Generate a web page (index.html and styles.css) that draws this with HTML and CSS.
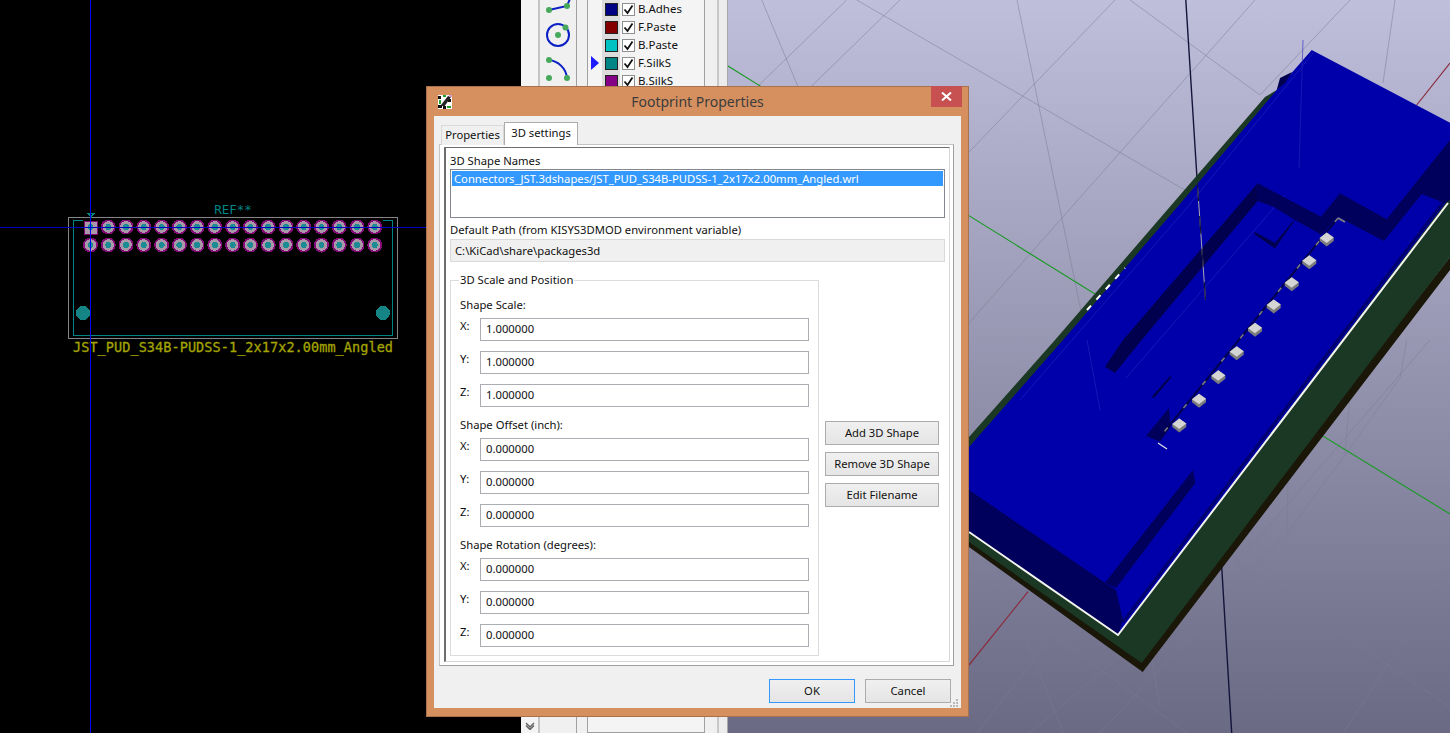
FILE: index.html
```html
<!DOCTYPE html>
<html lang="en">
<head>
    <meta charset="UTF-8">
    <meta name="viewport" content="width=device-width, initial-scale=1.0">
    <title>Footprint Properties</title>
    <link rel="stylesheet" href="styles.css">
</head>
<body>
<div class="desktop">

    <!-- footprint editor canvas -->
    <div class="pcb-view">
        <svg class="pcb-svg" width="521" height="733" viewBox="0 0 521 733">
            <defs>
                <g id="pad">
                    <circle class="pad-copper" r="7.500"/>
                    <circle class="pad-ring" r="5.800"/>
                    <circle class="pad-drill" r="3"/>
                </g>
            </defs>
            <rect class="court" x="68" y="217.500" width="329" height="121"/>
            <path class="silk" d="M83 220.500H73.500V335.500H392.500V220.500H383"/>
            <path class="silk-thin" d="M88 213.500H94L91 217Z"/>
            <circle class="hole" cx="83" cy="313" r="7"/>
            <circle class="hole" cx="383" cy="313" r="7"/>
            <rect class="pad-copper" x="84" y="220.500" width="14" height="14"/>
            <rect class="pad-ring" x="85" y="221.500" width="12" height="12"/>
            <circle class="pad-drill" cx="90.500" cy="227" r="3"/>
            <use href="#pad" x="108.300" y="227"/><use href="#pad" x="126" y="227"/><use href="#pad" x="143.800" y="227"/>
            <use href="#pad" x="161.600" y="227"/><use href="#pad" x="179.400" y="227"/><use href="#pad" x="197.100" y="227"/>
            <use href="#pad" x="214.900" y="227"/><use href="#pad" x="232.700" y="227"/><use href="#pad" x="250.400" y="227"/>
            <use href="#pad" x="268.200" y="227"/><use href="#pad" x="286" y="227"/><use href="#pad" x="303.700" y="227"/>
            <use href="#pad" x="321.500" y="227"/><use href="#pad" x="339.300" y="227"/><use href="#pad" x="357.100" y="227"/>
            <use href="#pad" x="374.800" y="227"/>
            <use href="#pad" x="90.500" y="245"/><use href="#pad" x="108.300" y="245"/><use href="#pad" x="126" y="245"/>
            <use href="#pad" x="143.800" y="245"/><use href="#pad" x="161.600" y="245"/><use href="#pad" x="179.400" y="245"/>
            <use href="#pad" x="197.100" y="245"/><use href="#pad" x="214.900" y="245"/><use href="#pad" x="232.700" y="245"/>
            <use href="#pad" x="250.400" y="245"/><use href="#pad" x="268.200" y="245"/><use href="#pad" x="286" y="245"/>
            <use href="#pad" x="303.700" y="245"/><use href="#pad" x="321.500" y="245"/><use href="#pad" x="339.300" y="245"/>
            <use href="#pad" x="357.100" y="245"/><use href="#pad" x="374.800" y="245"/>
            <text class="ref-text" x="233" y="213.500" text-anchor="middle">REF**</text>
            <text class="value-text" x="73" y="352" textLength="320" lengthAdjust="spacing">JST_PUD_S34B-PUDSS-1_2x17x2.00mm_Angled</text>
            <line class="cross-h" x1="0" y1="227.500" x2="521" y2="227.500"/>
            <line class="cross-v" x1="90.500" y1="0" x2="90.500" y2="733"/>
        </svg>
    </div>

    <!-- drawing tools -->
    <div class="tools">
        <div class="tools-gutter">
            <svg class="chevron" width="10" height="8" viewBox="0 0 10 8"><path d="M1 1L5 5L9 1M1 3.500L5 7.500L9 3.500"/></svg>
        </div>
        <div class="tools-strip">
            <svg width="37" height="90" viewBox="540 0 37 90">
                <path class="tool-line" d="M549 10L567 6L572 -6"/>
                <circle class="tool-line" cx="558" cy="35" r="11"/>
                <path class="tool-line" d="M549 60C558 61 566 68 567 78"/>
                <circle class="tool-dot" cx="549" cy="10" r="3"/>
                <circle class="tool-dot" cx="567" cy="6" r="3"/>
                <circle class="tool-dot" cx="558" cy="35" r="3"/>
                <circle class="tool-dot" cx="565.500" cy="27.500" r="3"/>
                <circle class="tool-dot" cx="549" cy="60" r="3"/>
                <circle class="tool-dot" cx="549" cy="78" r="3"/>
                <circle class="tool-dot" cx="567" cy="78" r="3"/>
            </svg>
        </div>
    </div>

    <!-- layer manager -->
    <div class="layers">
        <div class="layers-list">
            <div class="layer-row">
                <span class="layer-mark"></span>
                <span class="swatch"><i class="swatch-fill c-badhes"></i></span>
                <span class="check"><svg width="11" height="11" viewBox="0 0 11 11"><path d="M1.500 5.500L4.500 9L9.500 1.500"/></svg></span>
                <span class="layer-name">B.Adhes</span>
            </div>
            <div class="layer-row">
                <span class="layer-mark"></span>
                <span class="swatch"><i class="swatch-fill c-fpaste"></i></span>
                <span class="check"><svg width="11" height="11" viewBox="0 0 11 11"><path d="M1.500 5.500L4.500 9L9.500 1.500"/></svg></span>
                <span class="layer-name">F.Paste</span>
            </div>
            <div class="layer-row">
                <span class="layer-mark"></span>
                <span class="swatch"><i class="swatch-fill c-bpaste"></i></span>
                <span class="check"><svg width="11" height="11" viewBox="0 0 11 11"><path d="M1.500 5.500L4.500 9L9.500 1.500"/></svg></span>
                <span class="layer-name">B.Paste</span>
            </div>
            <div class="layer-row">
                <span class="layer-mark"><i class="layer-arrow"></i></span>
                <span class="swatch"><i class="swatch-fill c-fsilk"></i></span>
                <span class="check"><svg width="11" height="11" viewBox="0 0 11 11"><path d="M1.500 5.500L4.500 9L9.500 1.500"/></svg></span>
                <span class="layer-name">F.SilkS</span>
            </div>
            <div class="layer-row">
                <span class="layer-mark"></span>
                <span class="swatch"><i class="swatch-fill c-bsilk"></i></span>
                <span class="check"><svg width="11" height="11" viewBox="0 0 11 11"><path d="M1.500 5.500L4.500 9L9.500 1.500"/></svg></span>
                <span class="layer-name">B.SilkS</span>
            </div>
        </div>
        <div class="layers-side"></div>
    </div>

    <!-- 3d viewer, coordinates in the viewBox are page pixels -->
    <div class="view3d">
        <svg width="722" height="733" viewBox="728 0 722 733">
            <defs>
                <linearGradient id="sky" x1="0" y1="0" x2="0" y2="1">
                    <stop offset="0" stop-color="#bfbfdb"/>
                    <stop offset="1" stop-color="#6a6a85"/>
                </linearGradient>
                <g id="pin">
                    <path class="pin-side" d="M-7 0L0 -5.500L7 -0.500V3L0 8.500L-7 3Z"/>
                    <path class="pin-top" d="M-7 0L0 -5.500L7 -0.500L0 5Z"/>
                </g>
            </defs>
            <rect x="728" y="0" width="722" height="733" fill="url(#sky)"/>

            <g class="grid">
                <path d="M761.700 0L797.700 86M846.700 0L758 86M900 0L811.700 86M856.700 0L1190 193M1115 0L923 200"/>
                <path d="M1255 0L969 323M1017 0L1087 340M1130 0L1260 95M1395 0L1383 83M1350 0L1260 95"/>
                <path d="M1406.700 340L1400 378L1345 455L1287 533L1100 733M1350 393L1345 455M1288 480L1287 533"/>
                <path d="M1152 660L1160 707M1430 340L1237 563M1237 563L1450 707M1450 570L1343 733"/>
                <path d="M969 573L1187 733M993 553L1063 733M1067 617L977 733M1127 650L1030 733"/>
            </g>

            <path class="axis-green" d="M728 66L1095 294M1320 434.300L1450 514"/>
            <path class="axis-red" d="M1416.700 105L1450 63M1028 591.700L969 665"/>
            <path class="axis-z" d="M1185.800 0L1197.300 183M1221.700 566.700L1231.700 733"/>

            <!-- board -->
            <path class="board-under" d="M969 547L1142.700 672L1450 270V257L1141.700 655L969 540Z"/>
            <path class="board" d="M1265 97L1193 180L1055 340L969 437V542L1141.700 663L1450 257V190L1311 70Z"/>

            <!-- connector body -->
            <path class="body" d="M1311.700 50L1450 122.700V197L1118 635L969 532V447L1063 340L1198 183L1270 98L1276.700 90Z"/>
            <path class="body-dark2" d="M1276.700 90L1280 78L1292 72L1285 83Z"/>

            <g class="grid-faint">
                <path d="M1303 40L1299 168M1313 53L1185 210L1020 400M1285 195L1126 378M1087 340L1100 410"/>
            </g>

            <path class="edge-dark" d="M1123 622L1338 340L1448 196"/>

            <path class="body-dark" d="M969 490L1105 582.700L1116 590L1123 620L1118 635L969 532Z"/>
            <path class="body-dark" d="M1105 582.700L1193 470L1195.300 483L1116 588Z"/>
            <path class="body-dark2" d="M1257.700 183.300L1123 340L1105 366.700L1115 373L1141.700 340L1257.700 201Z"/>
            <path class="body-dark" d="M1257.700 183.300L1321 216.700L1340 193.300L1386.700 219.300L1450 140V200L1445 203.300L1421.700 194L1384 241L1337.700 216.700L1321.700 235L1295 220L1273.300 206.700L1257.700 201Z"/>
            <path class="body-dark2" d="M1295 220L1275 248.300L1254.300 234.300L1255 232L1275 243L1293 221Z"/>
            <path class="body-dark2" d="M1151.700 396.700L1170 376L1171.300 377.300L1154.300 397.700Z"/>
            <path class="body-dark" d="M1169 408L1170.700 426.700L1160 441.700L1146 436Z"/>

            <path class="pin-rail" d="M1338 218L1160 437"/>
            <path class="pin-dash" d="M1338 218L1160 437"/>
            <path class="pin-end" d="M1338 218L1345 222"/>
            <path class="pin-white" d="M1158 443L1167 449"/>
            <use href="#pin" x="1326.700" y="238"/>
            <use href="#pin" x="1309.300" y="260.700"/>
            <use href="#pin" x="1291.700" y="282.700"/>
            <use href="#pin" x="1273.700" y="305"/>
            <use href="#pin" x="1255" y="328.300"/>
            <use href="#pin" x="1236.700" y="351.700"/>
            <use href="#pin" x="1218.300" y="375.700"/>
            <use href="#pin" x="1199" y="399.300"/>
            <use href="#pin" x="1179.300" y="424"/>

            <path class="outline" d="M969 532L1118 635L1448 203"/>
            <path class="outline-dash" d="M1087 310L1125 268"/>
            <path class="axis-z-dash" d="M1197.300 183L1205.500 300"/>
            <path class="axis-z-dash2" d="M1197.300 183L1205.500 300"/>
        </svg>
    </div>

    <!-- dialog window -->
    <div class="dialog">
        <div class="titlebar">
            <svg class="app-icon" width="16" height="16" viewBox="0 0 16 16">
                <rect x="1" y="1" width="14" height="14" fill="#fff"/>
                <path d="M1 2h3v3H1zM1 11h4v3H1zM6 12h3v3H6zM11 5h3v3h-3z" fill="#111"/>
                <path d="M2 6h2v4H2zM6 1h3v2H6zM10 12h4v2h-4z" fill="#1fa32b"/>
                <path d="M4 11L11 2L14 3L7 13Z" fill="#222"/>
                <path d="M12 1h3v2h-3z" fill="#d59ad6"/>
            </svg>
            <span class="title-text">Footprint Properties</span>
            <div class="close-btn">
                <svg width="11" height="9" viewBox="0 0 11 9"><path d="M1 0.500L10 8.500M10 0.500L1 8.500"/></svg>
            </div>
        </div>
        <div class="client">
            <div class="tabs">
                <div class="tab">Properties</div>
                <div class="tab tab-active">3D settings</div>
            </div>
            <div class="tab-panel">
                <div class="panel-inner">
                    <div class="field-label">3D Shape Names</div>
                    <div class="listbox">
                        <div class="list-item">Connectors_JST.3dshapes/JST_PUD_S34B-PUDSS-1_2x17x2.00mm_Angled.wrl</div>
                    </div>
                    <div class="field-label path-label">Default Path (from KISYS3DMOD environment variable)</div>
                    <div class="path-box">C:\KiCad\share\packages3d</div>

                    <div class="lower">
                        <fieldset class="group">
                            <legend>3D Scale and Position</legend>

                            <div class="section-label first">Shape Scale:</div>
                            <div class="coord"><label>X:</label><input type="text" value="1.000000"></div>
                            <div class="coord"><label>Y:</label><input type="text" value="1.000000"></div>
                            <div class="coord"><label>Z:</label><input type="text" value="1.000000"></div>

                            <div class="section-label">Shape Offset (inch):</div>
                            <div class="coord"><label>X:</label><input type="text" value="0.000000"></div>
                            <div class="coord"><label>Y:</label><input type="text" value="0.000000"></div>
                            <div class="coord"><label>Z:</label><input type="text" value="0.000000"></div>

                            <div class="section-label">Shape Rotation (degrees):</div>
                            <div class="coord"><label>X:</label><input type="text" value="0.000000"></div>
                            <div class="coord"><label>Y:</label><input type="text" value="0.000000"></div>
                            <div class="coord"><label>Z:</label><input type="text" value="0.000000"></div>
                        </fieldset>
                        <div class="side-buttons">
                            <button class="btn">Add 3D Shape</button>
                            <button class="btn">Remove 3D Shape</button>
                            <button class="btn">Edit Filename</button>
                        </div>
                    </div>
                </div>
            </div>
            <div class="footer">
                <button class="btn btn-wide btn-default">OK</button>
                <button class="btn btn-wide">Cancel</button>
            </div>
            <svg class="grip" width="9" height="9" viewBox="0 0 9 9">
                <path d="M6 0h2v2H6zM3 3h2v2H3zM6 3h2v2H6zM0 6h2v2H0zM3 6h2v2H3zM6 6h2v2H6z"/>
            </svg>
        </div>
    </div>
</div>
</body>
</html>
```
FILE: styles.css
```css
* {
    box-sizing: border-box;
}

html, body {
    margin: 0;
    padding: 0;
    overflow: hidden;
}

body {
    font-family: "Noto Sans", "Open Sans", sans-serif;
    font-size: 11.25px;
    color: #111;
}

svg {
    display: block;
}

.desktop {
    position: relative;
    display: flex;
    width: 1450px;
    height: 733px;
    overflow: hidden;
}

/* pcb canvas */
.pcb-view {
    width: 521px;
    background: #000;
}

.pcb-svg {
    shape-rendering: crispEdges;
}

.court {
    fill: none;
    stroke: #848484;
}

.silk {
    fill: none;
    stroke: #008484;
    stroke-width: 1;
}

.silk-thin {
    fill: none;
    stroke: #008484;
    stroke-width: 1.5;
}

.hole {
    fill: #158484;
}

.pad-copper {
    fill: #840a78;
}

.pad-ring {
    fill: #a898a8;
}

.pad-drill {
    fill: #1c8c94;
}

.ref-text {
    font-family: "DejaVu Sans Mono", monospace;
    font-size: 12.500px;
    fill: #008484;
}

.value-text {
    font-family: "DejaVu Sans Mono", monospace;
    font-size: 13.500px;
    fill: #a4a400;
    stroke: #a4a400;
    stroke-width: 0.300px;
}

.cross-h {
    stroke: #0000c0;
}

.cross-v {
    stroke: #0000ff;
}

/* tool strip */
.tools {
    display: flex;
    width: 56px;
    background: #f0f0f0;
}

.tools-gutter {
    display: flex;
    justify-content: center;
    align-items: flex-end;
    width: 19px;
    padding-bottom: 3px;
    background: #f4f4f4;
    border-right: 2px solid #c4c4c4;
}

.chevron path {
    fill: none;
    stroke: #666;
    stroke-width: 1.500;
}

.tools-strip {
    width: 37px;
    border-right: 1px solid #a0a0a0;
}

.tool-line {
    fill: none;
    stroke: #0a1fc4;
    stroke-width: 2;
}

.tool-dot {
    fill: #46a85a;
}

/* layer manager */
.layers {
    display: flex;
    width: 151px;
    background: #f0f0f0;
}

.layers-list {
    width: 118px;
    margin-left: 10px;
    border: 1px solid #a0a0a0;
    border-top: none;
    background: #f4f4f4;
    flex-shrink: 0;
}

.layer-row {
    display: flex;
    align-items: center;
    height: 18px;
}

.layer-mark {
    display: flex;
    align-items: center;
    width: 14px;
    padding-left: 3px;
}

.layer-arrow {
    width: 0;
    height: 0;
    border-left: 8px solid #1c1cff;
    border-top: 7px solid transparent;
    border-bottom: 7px solid transparent;
}

.swatch {
    display: flex;
    align-items: center;
    justify-content: center;
    width: 18px;
    height: 18px;
    background: #dcdcdc;
}

.swatch-fill {
    width: 13px;
    height: 13px;
    border: 1px solid #222;
}

.c-badhes { background: #000084; }
.c-fpaste { background: #840000; }
.c-bpaste { background: #00c2c2; }
.c-fsilk { background: #008484; }
.c-bsilk { background: #840084; }

.check {
    display: flex;
    align-items: center;
    justify-content: center;
    width: 13px;
    height: 13px;
    margin: 0 3px 0 2px;
    background: #fff;
    border: 1px solid #8e8f8f;
}

.check path {
    fill: none;
    stroke: #111;
    stroke-width: 1.800;
}

.layer-name {
    font-size: 11.500px;
    padding-bottom: 2px;
}

.layers-side {
    flex: 1;
    border-right: 1px solid #a8a8a8;
    background: linear-gradient(90deg, #f0f0f0 0 12px, #c8c8c8 12px 14px, #ececec 14px);
}

/* 3d view */
.view3d {
    flex: 1;
    background: #9a9ab4;
}

.grid path {
    fill: none;
    stroke: #7c7c96;
    stroke-opacity: 0.5;
}

.grid-faint path {
    fill: none;
    stroke: #2828c0;
    stroke-opacity: 0.6;
}

.axis-green {
    fill: none;
    stroke: #1f9a2a;
    stroke-width: 1.200;
}

.axis-red {
    fill: none;
    stroke: #8a2c3c;
    stroke-width: 1.200;
}

.axis-z {
    fill: none;
    stroke: #14143a;
    stroke-width: 1.400;
}

.axis-z-dash {
    fill: none;
    stroke: #a8a8b4;
    stroke-width: 1;
}

.axis-z-dash2 {
    fill: none;
    stroke: #14143a;
    stroke-width: 1.200;
    stroke-dasharray: 18 15;
}

.board {
    fill: #1a3823;
}

.board-under {
    fill: #1a1608;
}

.body {
    fill: #0000aa;
}

.body-dark {
    fill: #00005c;
}

.body-dark2 {
    fill: #00004e;
}

.edge-dark {
    fill: none;
    stroke: #000070;
    stroke-width: 3;
}

.pin-side {
    fill: #7c7c7c;
}

.pin-top {
    fill: #d4d4d4;
}

.pin-rail {
    fill: none;
    stroke: #000050;
    stroke-width: 2;
}

.pin-dash {
    fill: none;
    stroke: #808080;
    stroke-width: 1.500;
    stroke-dasharray: 5 25;
}

.pin-end {
    fill: none;
    stroke: #808080;
    stroke-width: 2;
}

.pin-white {
    fill: none;
    stroke: #e8e8e8;
    stroke-width: 1.200;
}

.outline {
    fill: none;
    stroke: #f4f4f0;
    stroke-width: 2;
}

.outline-dash {
    fill: none;
    stroke: #fff;
    stroke-width: 2;
    stroke-dasharray: 6 8;
}

/* dialog */
.dialog {
    position: absolute;
    left: 426px;
    top: 86px;
    width: 543px;
    height: 631px;
    display: flex;
    flex-direction: column;
    background: #d6905f;
    border: 1px solid #a8734c;
    padding: 0 7px 8px;
}

.titlebar {
    position: relative;
    display: flex;
    align-items: center;
    justify-content: center;
    height: 29px;
    flex-shrink: 0;
}

.title-text {
    font-size: 14px;
    color: #3c3c3c;
}

.app-icon {
    position: absolute;
    left: 3px;
    top: 7px;
}

.close-btn {
    position: absolute;
    right: -1px;
    top: -1px;
    display: flex;
    align-items: center;
    justify-content: center;
    width: 31px;
    height: 21px;
    background: #c75050;
}

.close-btn path {
    fill: none;
    stroke: #fff;
    stroke-width: 2;
}

.client {
    position: relative;
    flex: 1;
    display: flex;
    flex-direction: column;
    padding: 6px 7px 0 5px;
    background: #f0f0f0;
}

.tabs {
    position: relative;
    display: flex;
    align-items: flex-end;
    height: 23px;
    margin-bottom: -1px;
    padding-left: 2px;
    z-index: 1;
}

.tab {
    height: 20px;
    width: 63px;
    line-height: 18px;
    text-align: center;
    background: #f0f0f0;
    border: 1px solid #d9d9d9;
    border-bottom: none;
}

.tab-active {
    width: 74px;
    height: 23px;
    line-height: 20px;
    background: #fff;
    border-color: #acacac;
}

.tab-panel {
    height: 522px;
    padding: 2px 3px 3px 4px;
    background: #fff;
    border: 1px solid #c4c4c4;
    border-right-color: #a0a0a0;
    border-bottom-color: #a0a0a0;
}

.panel-inner {
    height: 100%;
    padding: 5px 4px 0 4px;
    border: 1px solid #d8d8d8;
    border-left: 2px solid #6e6e6e;
    border-top-color: #6e6e6e;
}

.field-label {
    height: 16px;
    line-height: 16px;
}

.listbox {
    height: 49px;
    padding: 1px;
    background: #fff;
    border: 1px solid #828790;
}

.list-item {
    height: 15px;
    line-height: 15px;
    padding-left: 2px;
    color: #fff;
    background: #3399ff;
    white-space: nowrap;
}

.path-label {
    margin-top: 4px;
}

.path-box {
    height: 23px;
    line-height: 21px;
    margin-top: 1px;
    padding-left: 4px;
    background: #f0f0f0;
    border: 1px solid #d9d9d9;
}

.lower {
    display: flex;
    margin-top: 9px;
}

.group {
    width: 369px;
    height: 385px;
    margin: 0;
    padding: 0 9px 0 9px;
    border: 1px solid #dcdcdc;
}

.group legend {
    margin-left: -1px;
    padding: 0 1px;
    line-height: 18px;
}

.section-label {
    height: 16px;
    line-height: 16px;
    margin-top: 10px;
    margin-bottom: 5px;
}

.section-label.first {
    margin-top: 8px;
}

.coord {
    display: flex;
    margin-bottom: 10px;
}

.coord label {
    width: 20px;
    height: 16px;
    line-height: 16px;
}

.coord input {
    width: 329px;
    height: 23px;
    padding: 0 5px 2px;
    font: inherit;
    color: #111;
    background: #fff;
    border: 1px solid #abadb3;
    outline: none;
}

.coord:last-child {
    margin-bottom: 0;
}

.section-label + .coord + .coord + .coord {
    margin-bottom: 0;
}

.side-buttons {
    display: flex;
    flex-direction: column;
    gap: 7px;
    margin-left: 6px;
    padding-top: 150px;
}

.btn {
    width: 114px;
    height: 24px;
    padding: 0 0 2px;
    font: inherit;
    color: #111;
    background: linear-gradient(#f0f0f0, #e5e5e5);
    border: 1px solid #acacac;
}

.btn-wide {
    width: 86px;
}

.btn-default {
    border-color: #3399ff;
}

.footer {
    display: flex;
    justify-content: flex-end;
    gap: 10px;
    margin-top: 13px;
    margin-right: 3px;
}

.grip {
    position: absolute;
    right: 2px;
    bottom: 0;
}

.grip path {
    fill: #b9b9b9;
}
```
